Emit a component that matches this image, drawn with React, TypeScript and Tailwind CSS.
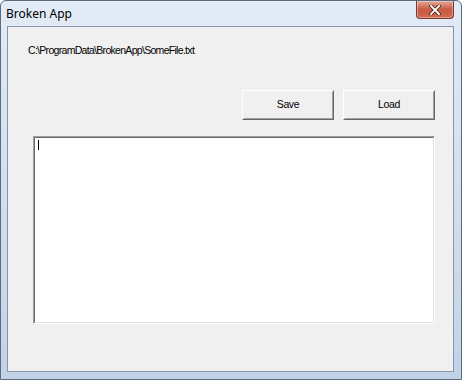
import React from 'react';

// Windows 7 style window with a path label, two buttons and a multiline text box

function CloseButton() {
  return (
    <div className="flex h-[18px] w-[38px] items-center justify-center rounded-b-[4px] border border-t-0 border-[#7a3a30] bg-gradient-to-b from-[#e4a898] via-[#c75a44] to-[#d26a4e] shadow-[inset_0_0_0_1px_rgba(255,255,255,0.35)]">
      <svg width="12" height="10" viewBox="0 0 12 10">
        <path d="M2 1 L10 9 M10 1 L2 9" stroke="#4a2018" strokeWidth="3.4" strokeLinecap="square" />
        <path d="M2 1 L10 9 M10 1 L2 9" stroke="#ffffff" strokeWidth="1.8" strokeLinecap="square" />
      </svg>
    </div>
  );
}

function ClassicButton({ label }: { label: string }) {
  return (
    <div className="flex h-[30px] w-[92px] border border-t-white border-l-white border-b-[#696969] border-r-[#696969] bg-[#f0f0f0]">
      <div className="flex flex-1 items-center justify-center border border-t-[#f0f0f0] border-l-[#f0f0f0] border-b-[#a0a0a0] border-r-[#a0a0a0] text-[10.5px] tracking-[-0.4px] text-black">
        {label}
      </div>
    </div>
  );
}

export default function App() {
  return (
    <div className="flex h-[380px] w-[462px] flex-col overflow-hidden rounded-t-[6px] border border-[#5a6b80] bg-gradient-to-b from-[#e2ebf6] via-[#d3dfee] to-[#c2d2e6] font-['Liberation_Sans',sans-serif]">
      {/* Title bar */}
      <div className="flex h-[25px] shrink-0 items-start justify-between pl-[5px] pr-[7px]">
        <div className="pt-[5px] font-['Noto_Sans',sans-serif] text-[12px] leading-[16px] text-black">Broken App</div>
        <CloseButton />
      </div>

      {/* Client area */}
      <div className="mb-[7px] ml-[6px] mr-[7px] flex flex-1 flex-col border border-[#8497ad] bg-[#f0f0f0]">
        <div className="ml-[20px] mt-[17px] text-[10.5px] leading-[13px] tracking-[-0.7px] text-black">C:\ProgramData\BrokenApp\SomeFile.txt</div>

        <div className="ml-[234px] mt-[33px] flex gap-[9px]">
          <ClassicButton label="Save" />
          <ClassicButton label="Load" />
        </div>

        <div className="ml-[25px] mt-[16px] h-[188px] w-[402px] border border-t-[#a0a0a0] border-l-[#a0a0a0] border-b-white border-r-white">
          <div className="h-full w-full border border-t-[#696969] border-l-[#696969] border-b-[#e3e3e3] border-r-[#e3e3e3] bg-white pl-[3px] pt-[2px]">
            <div className="h-[10px] w-px bg-black" />
          </div>
        </div>
      </div>
    </div>
  );
}
